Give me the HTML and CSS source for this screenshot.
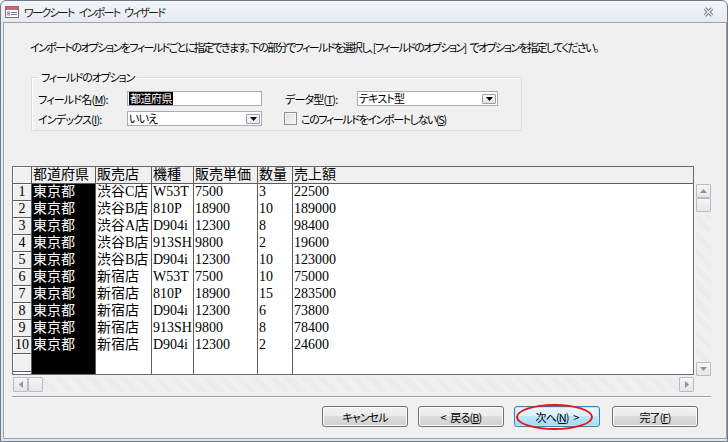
FILE: index.html
```html
<!DOCTYPE html>
<html lang="ja">
<head>
<meta charset="utf-8">
<title>ワークシート インポート ウィザード</title>
<link rel="stylesheet" href="styles.css">
</head>
<body>
<div class="window">
  <div class="titlebar">
    <svg class="appicon" width="14" height="12" viewBox="0 0 14 12">
      <rect x="0.5" y="0.5" width="13" height="11" fill="#ffffff" stroke="#8a6a78"/>
      <rect x="1" y="1" width="12" height="3" fill="#d25f7c"/>
      <rect x="2" y="5.5" width="3" height="4" fill="#9aa4b4"/>
      <rect x="6" y="6" width="6" height="1" fill="#6f7c92"/>
      <rect x="6" y="8" width="6" height="1" fill="#6f7c92"/>
    </svg>
    <span class="title">ワークシート インポート ウィザード</span>
    <svg class="close" width="11" height="10" viewBox="0 0 11 10">
      <path d="M2 1.5 L9 8.5 M9 1.5 L2 8.5" stroke="#6b7583" stroke-width="3.2" fill="none"/>
      <path d="M2 1.5 L9 8.5 M9 1.5 L2 8.5" stroke="#f4f6f8" stroke-width="1.2" fill="none"/>
    </svg>
  </div>
  <div class="client">
    <p class="intro">インポートのオプションをフィールドごとに指定できます。下の部分でフィールドを選択し、[フィールドのオプション] でオプションを指定してください。</p>
    <fieldset class="group">
      <legend>フィールドのオプション</legend>
      <div class="form">
        <span class="lbl name-lbl">フィールド名(<u>M</u>):</span>
        <div class="textbox name-box"><span class="selected">都道府県</span></div>
        <span class="lbl type-lbl">データ型(<u>T</u>):</span>
        <div class="combo type-box"><span class="val">テキスト型</span><span class="drop"><svg width="7" height="4" viewBox="0 0 7 4"><path d="M0 0 H7 L3.5 4 Z" fill="#000"/></svg></span></div>
        <span class="lbl idx-lbl">インデックス(<u>I</u>):</span>
        <div class="combo idx-box"><span class="val">いいえ</span><span class="drop"><svg width="7" height="4" viewBox="0 0 7 4"><path d="M0 0 H7 L3.5 4 Z" fill="#000"/></svg></span></div>
        <div class="check"><span class="box"></span><span class="chk-lbl">このフィールドをインポートしない(<u>S</u>)</span></div>
      </div>
    </fieldset>

    <div class="gridarea">
      <div class="gridrow">
        <div class="sheet">
          <div class="hd rn"></div>
          <div class="hd">都道府県</div>
          <div class="hd">販売店</div>
          <div class="hd">機種</div>
          <div class="hd">販売単価</div>
          <div class="hd">数量</div>
          <div class="hd">売上額</div>

          <div class="rn">1</div><div class="c sel">東京都</div><div class="c">渋谷C店</div><div class="c">W53T</div><div class="c">7500</div><div class="c">3</div><div class="c">22500</div>
          <div class="rn">2</div><div class="c sel">東京都</div><div class="c">渋谷B店</div><div class="c">810P</div><div class="c">18900</div><div class="c">10</div><div class="c">189000</div>
          <div class="rn">3</div><div class="c sel">東京都</div><div class="c">渋谷A店</div><div class="c">D904i</div><div class="c">12300</div><div class="c">8</div><div class="c">98400</div>
          <div class="rn">4</div><div class="c sel">東京都</div><div class="c">渋谷B店</div><div class="c">913SH</div><div class="c">9800</div><div class="c">2</div><div class="c">19600</div>
          <div class="rn">5</div><div class="c sel">東京都</div><div class="c">渋谷B店</div><div class="c">D904i</div><div class="c">12300</div><div class="c">10</div><div class="c">123000</div>
          <div class="rn">6</div><div class="c sel">東京都</div><div class="c">新宿店</div><div class="c">W53T</div><div class="c">7500</div><div class="c">10</div><div class="c">75000</div>
          <div class="rn">7</div><div class="c sel">東京都</div><div class="c">新宿店</div><div class="c">810P</div><div class="c">18900</div><div class="c">15</div><div class="c">283500</div>
          <div class="rn">8</div><div class="c sel">東京都</div><div class="c">新宿店</div><div class="c">D904i</div><div class="c">12300</div><div class="c">6</div><div class="c">73800</div>
          <div class="rn">9</div><div class="c sel">東京都</div><div class="c">新宿店</div><div class="c">913SH</div><div class="c">9800</div><div class="c">8</div><div class="c">78400</div>
          <div class="rn">10</div><div class="c sel">東京都</div><div class="c">新宿店</div><div class="c">D904i</div><div class="c">12300</div><div class="c">2</div><div class="c">24600</div>

          <div class="rn filler"></div><div class="c sel"></div><div class="c"></div><div class="c"></div><div class="c"></div><div class="c"></div><div class="c"></div>
        </div>
        <div class="vscroll">
          <div class="sbtn"><svg width="7" height="4" viewBox="0 0 7 4"><path d="M0 4 H7 L3.5 0 Z" fill="#8d959f"/></svg></div>
          <div class="thumb"></div>
          <div class="track"></div>
          <div class="sbtn"><svg width="7" height="4" viewBox="0 0 7 4"><path d="M0 0 H7 L3.5 4 Z" fill="#8d959f"/></svg></div>
        </div>
      </div>
      <div class="hscroll">
        <div class="sbtn"><svg width="4" height="7" viewBox="0 0 4 7"><path d="M4 0 V7 L0 3.5 Z" fill="#8d959f"/></svg></div>
        <div class="thumb"></div>
        <div class="track"></div>
        <div class="sbtn"><svg width="4" height="7" viewBox="0 0 4 7"><path d="M0 0 V7 L4 3.5 Z" fill="#8d959f"/></svg></div>
      </div>
    </div>

    <div class="sep"></div>

    <div class="buttons">
      <button class="btn">キャンセル</button>
      <button class="btn">&lt; 戻る(<u>B</u>)</button>
      <button class="btn focus">次へ(<u>N</u>) &gt;<span class="mark"></span></button>
      <button class="btn last">完了(<u>F</u>)</button>
    </div>
  </div>
</div>
</body>
</html>
```

FILE: styles.css
```css
* { box-sizing: border-box; }
html, body { margin: 0; padding: 0; }
body {
  width: 728px;
  height: 442px;
  overflow: hidden;
  background: #ffffff;
  font-family: "Noto Sans CJK JP", sans-serif;
  font-size: 11px;
  color: #000;
}
u { text-decoration: underline; text-underline-offset: 1px; }

.window {
  width: 728px;
  height: 442px;
  border: 1px solid #6f7b88;
  border-radius: 6px 6px 0 0;
  background: linear-gradient(#f3f5f8, #e6eaef 22px, #e2e7ed);
  padding: 0 0 2px 2px;
  display: flex;
  flex-direction: column;
}

.titlebar {
  height: 21px;
  display: flex;
  align-items: center;
  padding-left: 2px;
}
.appicon { flex: none; }
.title {
  margin-left: 5px;
  font-size: 11px;
  letter-spacing: -1.7px;
  word-spacing: 4px;
  line-height: 14px;
  color: #1b1b1b;
  font-feature-settings: "palt";
}
.close { margin-left: auto; margin-right: 13px; margin-top: 1px; }

.client {
  flex: 1;
  border: 1px solid #9aa4ae;
  background: #f0f0f0;
  display: flex;
  flex-direction: column;
}

.intro {
  margin: 17px 0 0 26px;
  line-height: 14px;
  font-size: 11px;
  letter-spacing: -1.6px;
  word-spacing: 3px;
  font-feature-settings: "palt";
  white-space: nowrap;
}

.group {
  margin: 16px 0 0 27px;
  width: 491px;
  padding: 0 0 4px 0;
  border: 1px solid #d5dfe5;
  box-shadow: inset 1px 1px 0 #ffffff;
  min-width: 0;
}
.group legend {
  margin-left: 7px;
  padding: 0 2px;
  line-height: 14px;
  font-size: 11px;
  letter-spacing: -1.2px;
  font-feature-settings: "palt";
}

.form {
  margin-top: 7px;
  padding-left: 6px;
  display: grid;
  grid-template-columns: 89px 135px 23px 72px 141px;
  grid-template-rows: 15px 15px;
  row-gap: 5px;
  align-items: center;
  font-size: 11px;
  font-feature-settings: "palt";
}
.lbl { line-height: 14px; white-space: nowrap; letter-spacing: -0.8px; }
.name-lbl { grid-column: 1; grid-row: 1; }
.name-box { grid-column: 2; grid-row: 1; }
.type-lbl { grid-column: 4; grid-row: 1; }
.type-box { grid-column: 5; grid-row: 1; }
.idx-lbl { grid-column: 1; grid-row: 2; }
.idx-box { grid-column: 2; grid-row: 2; }
.check { grid-column: 4 / 6; grid-row: 2; margin-left: -1px; display: flex; align-items: center; gap: 4px; white-space: nowrap; }
.chk-lbl { letter-spacing: -1.4px; }

.textbox, .combo {
  height: 15px;
  background: #fff;
  border: 1px solid #a9aeb5;
  display: flex;
  align-items: center;
  line-height: 13px;
  padding-left: 1px;
  letter-spacing: -0.8px;
}
.selected { background: #000; color: #fff; padding: 0 1px; line-height: 13px; letter-spacing: -0.5px; }
.combo .val { flex: 1; }
.drop {
  width: 14px;
  height: 10px;
  margin-right: 1px;
  border: 1px solid #97a0aa;
  border-radius: 1px;
  background: linear-gradient(#fbfbfb, #e6e6e6);
  display: flex;
  align-items: center;
  justify-content: center;
}
.drop svg { display: block; }

.check .box {
  width: 13px;
  height: 13px;
  border: 1px solid #8e8f8f;
  background: linear-gradient(135deg, #dcdcdc, #fafafa);
  box-shadow: inset 0 0 0 1px #f4f4f4;
}

.gridarea {
  margin: 35px 0 0 8px;
  display: flex;
  flex-direction: column;
}
.gridrow { display: flex; align-items: flex-start; }

.sheet {
  width: 682px;
  height: 209px;
  border: 1px solid #6a6a6a;
  display: grid;
  grid-template-columns: 18px 64px 56px 42px 64px 35px 1fr;
  grid-template-rows: 17px repeat(10, 17px) 1fr;
  font-family: "Liberation Serif", "Noto Sans CJK JP", serif;
  font-size: 14px;
  line-height: 16px;
  background: #fff;
}
.sheet > div { overflow: hidden; white-space: nowrap; }
.sheet .hd {
  background: #f0f0f0;
  border-left: 1px solid #5d5d5d;
  border-bottom: 1px solid #5d5d5d;
  padding-left: 1px;
}
.sheet .hd.rn { border-left: 0; }
.sheet .rn {
  background: #f0f0f0;
  border-bottom: 1px solid #5d5d5d;
  box-shadow: inset 1px 1px 0 #ffffff;
  text-align: center;
}
.sheet .rn.filler { height: 18px; }
.sheet .c {
  border-left: 1px solid #5d5d5d;
  padding-left: 1px;
}
.sheet .c.sel { background: #000; color: #fff; }

.vscroll {
  margin: 18px 0 0 2px;
  width: 15px;
  height: 192px;
  display: flex;
  flex-direction: column;
  background: #f1f1f1;
}
.hscroll {
  margin: 1px 0 0 1px;
  width: 681px;
  height: 15px;
  display: flex;
  background: #f1f1f1;
}
.sbtn, .thumb {
  flex: none;
  width: 15px;
  height: 15px;
  border: 1px solid #b6bcc3;
  border-radius: 1px;
  background: linear-gradient(#f5f5f5, #e6e6e6);
  display: flex;
  align-items: center;
  justify-content: center;
}
.vscroll .sbtn, .vscroll .thumb { height: 14px; }
.track {
  flex: 1;
  background: repeating-linear-gradient(45deg, #f4f4f4 0 1px, #e9e9e9 1px 2px);
}
.sbtn svg { display: block; }

.sep {
  margin: 4px 0 0 8px;
  width: 699px;
  height: 2px;
  border-top: 1px solid #a0a0a0;
  border-bottom: 1px solid #ffffff;
}

.buttons {
  margin-top: 8px;
  padding-right: 28px;
  display: flex;
  justify-content: flex-end;
  gap: 10px;
}
.btn {
  position: relative;
  width: 86px;
  height: 21px;
  border: 1px solid #707070;
  border-radius: 3px;
  background: linear-gradient(#f2f2f2 0%, #ebebeb 50%, #dddddd 50%, #cfcfcf 100%);
  box-shadow: inset 0 0 0 1px #fcfcfc;
  font-family: "Noto Sans CJK JP", sans-serif;
  font-size: 11px;
  letter-spacing: -0.9px;
  word-spacing: 3px;
  font-feature-settings: "palt";
  line-height: 14px;
  color: #000;
  padding: 0;
}
.btn.focus {
  border-color: #3c7fb1;
  background: linear-gradient(#eaf6fd 0%, #d9f0fc 50%, #bee6fd 50%, #a7d9f5 100%);
  box-shadow: inset 0 0 0 1px #c4e5f6;
}
.btn.last { margin-left: 2px; }
.mark {
  position: absolute;
  left: 1px;
  top: -3px;
  width: 77px;
  height: 26px;
  border: 2px solid #e3161c;
  border-radius: 50%;
  pointer-events: none;
}
```
